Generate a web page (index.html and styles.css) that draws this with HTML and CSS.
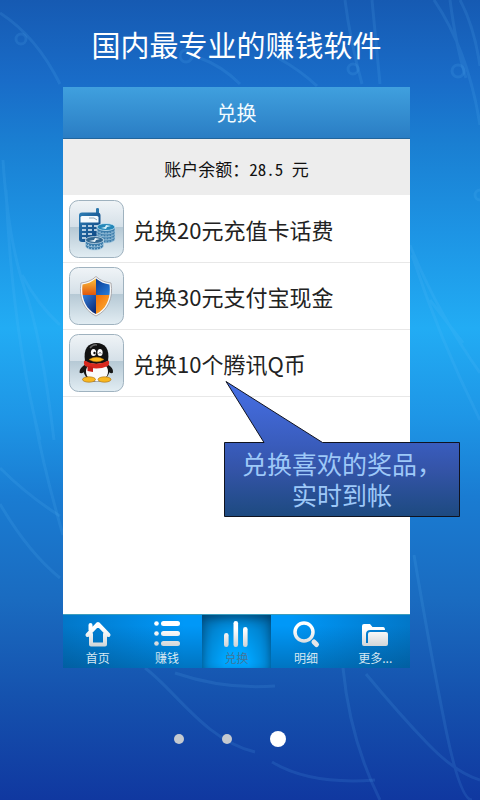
FILE: index.html
```html
<!DOCTYPE html>
<html lang="zh-CN">
<head>
<meta charset="utf-8">
<meta name="viewport" content="width=device-width, initial-scale=1">
<title>兑换</title>
<link rel="stylesheet" href="styles.css">
</head>
<body>
<svg class="backdrop" viewBox="0 0 480 800" preserveAspectRatio="none" aria-hidden="true">
  <g fill="none" stroke="#6cc4ff" stroke-opacity=".12" stroke-width="3">
    <path d="M0 13Q36 36 60 84"/><circle cx="21" cy="39" r="5"/>
    <path d="M200 58Q222 66 240 84M278 58Q300 70 317 86M345 0Q350 40 362 84M372 0L380 84"/>
    <circle cx="353" cy="69" r="5"/><circle cx="186" cy="56" r="6"/>
    <path d="M434 0Q468 50 480 125M450 0Q456 46 466 78M460 0Q474 26 480 66"/><circle cx="458" cy="71" r="6"/>
    <circle cx="480" cy="195" r="5"/>
    <path d="M410 245Q436 310 480 373M412 255Q440 340 480 420M430 300L463 343"/>
    <path d="M3 160Q8 240 25 290T54 440M6 190Q12 330 40 440M22 275Q38 305 60 325M35 420Q44 470 63 535"/>
    <path d="M0 468Q28 496 60 516M0 504Q28 552 60 578"/>
    <path d="M414 555Q430 650 445 725T472 800M343 668Q350 740 380 800M366 674Q400 715 428 744T480 780"/>
    <path d="M145 668C175 690 205 740 255 752M175 673Q225 690 275 686M272 762Q310 785 375 780"/>
  </g>
</svg>
<main class="page">
  <h1 class="slogan">国内最专业的赚钱软件</h1>

  <section class="phone">
    <header class="topbar"><h2 class="topbar-title">兑换</h2></header>
    <p class="balance">账户余额：28.5 元</p>

    <ul class="rewards">
      <li><a class="reward" href="#phone">
        <svg class="tile" viewBox="0 0 55 58" aria-hidden="true">
          <defs>
            <linearGradient id="tile" x1="0" y1="0" x2="0" y2="1">
              <stop offset="0" stop-color="#f0f4f7"/><stop offset=".46" stop-color="#d5e0e8"/>
              <stop offset=".47" stop-color="#b6c9d5"/><stop offset="1" stop-color="#e2edf3"/>
            </linearGradient>
            <linearGradient id="mobile" x1="0" y1="0" x2="1" y2="1">
              <stop offset="0" stop-color="#2c7db5"/><stop offset="1" stop-color="#0b3f7c"/>
            </linearGradient>
            <g id="coin">
              <path d="M-9 0V3a9 4 0 0 0 18 0V0z" fill="#3d7dab" stroke="#b5d2e4" stroke-width=".7"/>
              <path d="M-6 4v2M-3 5v2M0 5v2M3 5v2M6 4v2" stroke="#a9cee6" stroke-width=".7"/>
            </g>
          </defs>
          <rect x=".5" y=".5" width="54" height="57" rx="9" fill="url(#tile)" stroke="#9fb2bf"/>
          <path d="M27 14V9q0-1 1.500-1T30 9v5z" fill="#2875ab"/>
          <rect x="10" y="12.500" width="21.500" height="29.500" rx="3" fill="url(#mobile)"/>
          <path d="M13 16h15q1.500 0 1.500 1.500v5h-18v-5Q11.500 16 13 16z" fill="#f5fafd"/>
          <path d="M20 18q6-1 8 2" fill="none" stroke="#8fa9ba"/>
          <path d="M13 26h4M19 26h4M25 26h4M13 30h4M19 30h4M25 30h4M13 34h4M19 34h4M13 38h4" stroke="#e3eff7" stroke-width="1.600"/>
          <use href="#coin" x="37" y="36"/><use href="#coin" x="37" y="33"/><use href="#coin" x="37" y="30"/><use href="#coin" x="37" y="27"/>
          <ellipse cx="37" cy="27" rx="9" ry="3.500" fill="#2587b8" stroke="#dcf0fa" stroke-width=".7"/>
          <path d="M32 28l4-1 1-2 5 1-4 1-1 2z" fill="#d8f2fc"/>
          <use href="#coin" x="25.500" y="43"/><use href="#coin" x="25.500" y="40"/>
          <ellipse cx="25.500" cy="40" rx="9" ry="3.500" fill="#326790" stroke="#dcebf4" stroke-width=".7"/>
          <path d="M20 41l5-1 1-2 5 1-4 1-1 2z" fill="#eaf5fa"/>
        </svg>
        <span>兑换20元充值卡话费</span></a></li>
      <li><a class="reward" href="#alipay">
        <svg class="tile" viewBox="0 0 55 58" aria-hidden="true">
          <defs>
            <clipPath id="shield"><path d="M27 11.500C23 15 18 17 13.500 17.500C12 30 16 42 27 47C38 42 42 30 40.500 17.500C36 17 31 15 27 11.500z"/></clipPath>
            <linearGradient id="gold" x1="0" y1="0" x2="0" y2="1"><stop offset="0" stop-color="#ffd044"/><stop offset="1" stop-color="#e0560c"/></linearGradient>
            <linearGradient id="amber" x1="0" y1="0" x2="1" y2="1"><stop offset="0" stop-color="#f36d05"/><stop offset="1" stop-color="#ffc445"/></linearGradient>
            <linearGradient id="navy" x1="0" y1="0" x2="1" y2="1"><stop offset="0" stop-color="#07348c"/><stop offset="1" stop-color="#2b86e4"/></linearGradient>
            <linearGradient id="blue" x1="0" y1="0" x2="1" y2="1"><stop offset="0" stop-color="#3a8ae8"/><stop offset="1" stop-color="#061d66"/></linearGradient>
          </defs>
          <rect x=".5" y=".5" width="54" height="57" rx="9" fill="url(#tile)" stroke="#9fb2bf"/>
          <path d="M27 9.500C23 13.500 17 15.500 12 16C9.500 31 15 43.500 27 49C39 43.500 44.500 31 42 16C37 15.500 31 13.500 27 9.500z" fill="#f8f8f8" stroke="#a09c9e" stroke-width=".8"/>
          <g clip-path="url(#shield)">
            <path d="M10 9h17v19H10z" fill="url(#gold)"/><path d="M27 9h17v19H27z" fill="url(#navy)"/>
            <path d="M10 28h17v21H10z" fill="url(#blue)"/><path d="M27 28h17v21H27z" fill="url(#amber)"/>
          </g>
        </svg>
        <span>兑换30元支付宝现金</span></a></li>
      <li><a class="reward" href="#qcoin">
        <svg class="tile" viewBox="0 0 55 58" aria-hidden="true">
          <rect x=".5" y=".5" width="54" height="57" rx="9" fill="url(#tile)" stroke="#9fb2bf"/>
          <path d="M17 30Q10 34 10.500 38.500Q13 41 18 35zM38 30Q45 34 44 38.500Q42 41 37 35z" fill="#161616"/>
          <ellipse cx="27.500" cy="36" rx="13" ry="11.500" fill="#141414"/>
          <ellipse cx="28" cy="37.500" rx="11" ry="10" fill="#fafafa"/>
          <ellipse cx="20" cy="45.500" rx="6.500" ry="2.700" fill="#f8b720" stroke="#a66b0d" stroke-width=".6"/>
          <ellipse cx="35.500" cy="45.500" rx="6.500" ry="2.700" fill="#f8b720" stroke="#a66b0d" stroke-width=".6"/>
          <path d="M16 27C14 15 19 9 27.500 9S41 15 39 27Q27 33 16 27z" fill="#121212"/>
          <path d="M21 14Q24 10 28 11" fill="none" stroke="#666" stroke-width="1.500"/>
          <ellipse cx="24.500" cy="18.500" rx="2.600" ry="3.600" fill="#fff"/><ellipse cx="31" cy="18.500" rx="2.600" ry="3.600" fill="#fff"/>
          <circle cx="25.500" cy="19" r="1.200" fill="#111"/><path d="M30 19.500q1-2 2 0" fill="none" stroke="#111"/>
          <path d="M15.500 26.500Q27 33 39.500 26.500Q41 29 39 32Q27 37 16 32Q14 29 15.500 26.500z" fill="#d8281e"/>
          <path d="M18.500 32l5.500 1v5l-5.500-1z" fill="#c41e17"/>
          <path d="M20 25.500Q27.500 21 35 25.500Q28 30 20 25.500z" fill="#fdb91b" stroke="#c87f0b" stroke-width=".5"/>
        </svg>
        <span>兑换10个腾讯Q币</span></a></li>
    </ul>

    <aside class="callout">
      <svg class="callout-shape" viewBox="0 0 236 136" preserveAspectRatio="none" aria-hidden="true">
        <defs><linearGradient id="bubble" x1="0" y1="0" x2="0" y2="1">
          <stop offset="0" stop-color="#4770e6"/><stop offset=".47" stop-color="#395cbc"/><stop offset=".65" stop-color="#3454a8"/><stop offset="1" stop-color="#1d4a80"/>
        </linearGradient></defs>
        <path d="M.5 61.500H40L2 .5L98.500 61.500H235.500V135.500H.5z" fill="url(#bubble)" stroke="#10131f"/>
      </svg>
      <p class="callout-text">兑换喜欢的奖品，<br>实时到帐</p>
    </aside>

    <nav class="tabs">
      <a class="tab" href="#home">
        <svg class="tab-icon" viewBox="0 0 26 26" aria-hidden="true">
          <defs><linearGradient id="metal" gradientUnits="userSpaceOnUse" x1="0" y1="0" x2="0" y2="26"><stop offset=".3" stop-color="#fff"/><stop offset="1" stop-color="#cfd3d6"/></linearGradient></defs>
          <path d="M2.500 14L13 3L23.500 14M6 13V23.500H20V13M5.500 9V4" fill="none" stroke="url(#metal)" stroke-width="4" stroke-linejoin="round" stroke-linecap="round"/>
        </svg><span>首页</span></a>
      <a class="tab" href="#earn">
        <svg class="tab-icon" viewBox="0 0 26 26" aria-hidden="true">
          <g fill="url(#metal)"><circle cx="2.500" cy="2.500" r="2.300"/><circle cx="2.500" cy="12.500" r="2.300"/><circle cx="2.500" cy="22.500" r="2.300"/>
          <rect x="7" y="0" width="19" height="5" rx="2.500"/><rect x="7" y="10" width="19" height="5" rx="2.500"/><rect x="7" y="20" width="19" height="5" rx="2.500"/></g>
        </svg><span>赚钱</span></a>
      <a class="tab tab-active" href="#exchange" aria-current="page">
        <svg class="tab-icon" viewBox="0 0 26 26" aria-hidden="true">
          <g fill="url(#metal)"><rect x="1" y="12" width="4.600" height="14" rx="2.300"/><rect x="10.500" y="0" width="4.600" height="26" rx="2.300"/><rect x="20" y="6" width="4.600" height="20" rx="2.300"/></g>
        </svg><span>兑换</span></a>
      <a class="tab" href="#detail">
        <svg class="tab-icon" viewBox="0 0 26 26" aria-hidden="true">
          <circle cx="11" cy="11" r="9" fill="none" stroke="url(#metal)" stroke-width="3.500"/>
          <path d="M21 21L23.500 23.500" stroke="#e4e6e8" stroke-width="5" stroke-linecap="round"/>
        </svg><span>明细</span></a>
      <a class="tab" href="#more">
        <svg class="tab-icon" viewBox="0 0 26 26" aria-hidden="true">
          <path d="M0 5Q0 3 2 3H8L10.500 6H21Q23 6 23 9H8.500Q4 9 4 13V25H2Q0 25 0 23z" fill="url(#metal)"/>
          <path d="M6 13Q6 11 8 11H24Q26 11 26 13V23Q26 25 24 25H3V22H6z" fill="url(#metal)"/>
        </svg><span>更多...</span></a>
    </nav>
  </section>

  <div class="pager">
    <button class="dot" type="button" aria-label="1"></button>
    <button class="dot" type="button" aria-label="2"></button>
    <button class="dot dot-current" type="button" aria-label="3"></button>
  </div>
</main>
</body>
</html>
```
FILE: styles.css
```css
* { box-sizing: border-box; }

body {
  margin: 0;
  min-height: 100vh;
  position: relative;
  font-family: "Noto Sans CJK SC", sans-serif;
  background: linear-gradient(#165ab2 0%, #196cc8 10%, #1a7fd2 18%, #1d94e4 29%, #22acf4 41%, #1e96e6 52%, #1a7cd2 62%, #1a6bc0 75%, #1552ae 87%, #1038a0 100%);
}

h1, h2, p, ul { margin: 0; padding: 0; font-weight: 400; }
ul { list-style: none; }
a { color: inherit; text-decoration: none; }

.backdrop {
  position: absolute;
  inset: 0;
  width: 100%;
  height: 100%;
}

.page {
  position: relative;
  min-height: 100vh;
  display: flex;
  flex-direction: column;
  padding: 22px 70px 52px 63px;
}

.slogan {
  font-size: 29px;
  line-height: 44px;
  text-align: center;
  white-space: nowrap;
  color: #fff;
}

.phone {
  position: relative;
  flex: 1;
  display: flex;
  flex-direction: column;
  margin: 21px 0 62px;
  background: #fff;
}

.topbar {
  padding: 10px 0;
  background: linear-gradient(#40a0de, #2a7dc4);
  border-bottom: 1px solid #22659c;
}

.topbar-title {
  font-size: 20px;
  line-height: 31px;
  text-align: center;
  color: #f2fbff;
}

.balance {
  padding: 18px 0 14px;
  font-size: 17px;
  line-height: 24px;
  text-align: center;
  color: #111;
  background: #ededed;
  font-feature-settings: "hwid";
}

.rewards { flex: 1; padding-top: 1px; }

.reward {
  display: flex;
  align-items: center;
  gap: 9px;
  padding: 4px 6px;
  border-bottom: 1px solid #e8e8e8;
  font-size: 22px;
  line-height: 32px;
  white-space: nowrap;
  color: #222;
}

.tile { width: 55px; height: 58px; flex: none; }

.callout {
  position: absolute;
  top: 294px;
  right: -50px;
  width: 236px;
  padding: 67px 0 7px;
}

.callout-shape {
  position: absolute;
  inset: 0;
  width: 100%;
  height: 100%;
}

.callout-text {
  position: relative;
  font-size: 25px;
  line-height: 31px;
  text-align: center;
  color: #9dc8f8;
}

.tabs {
  display: grid;
  grid-template-columns: repeat(5, 1fr);
  background: linear-gradient(rgba(0, 50, 90, 0) 20%, rgba(0, 50, 90, .35)), linear-gradient(90deg, #0277c8, #0098f8 35%, #0098f8 65%, #0277c8);
  border-top: 1px solid #3c9dbd;
}

.tab {
  display: flex;
  flex-direction: column;
  align-items: center;
  gap: 3px;
  padding: 6px 0 2px;
  font-size: 12px;
  line-height: 16px;
  color: #d5e7f2;
}

.tab-active {
  color: #40769b;
  background: radial-gradient(ellipse at 50% 100%, #00a6ff 25%, #0087d5 65%, #00629f 100%);
  box-shadow: inset 0 4px 8px rgba(0, 40, 70, .5);
}

.tab-icon { width: 26px; height: 26px; overflow: visible; }

.pager {
  display: flex;
  justify-content: center;
  align-items: center;
  gap: 38px;
  height: 18px;
  padding-right: 13px;
}

.dot {
  width: 10px;
  height: 10px;
  padding: 0;
  border: 0;
  border-radius: 50%;
  background: #c5cad0;
}

.dot-current {
  width: 16px;
  height: 16px;
  background: #fff;
}
```
